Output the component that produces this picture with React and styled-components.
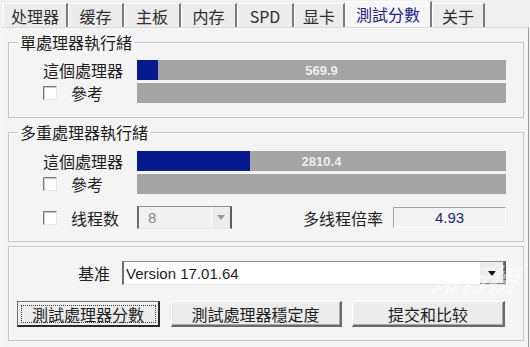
import styled, { createGlobalStyle } from "styled-components";

const GlobalStyle = createGlobalStyle`
  html, body {
    margin: 0;
    padding: 0;
    background: #f0f0f0;
  }
  body {
    font-family: "Noto Sans CJK SC", "Liberation Sans", sans-serif;
    color: #1e1e1e;
  }
`;

const Window = styled.div`
  position: relative;
  width: 530px;
  height: 347px;
  overflow: hidden;
  background: #f0f0f0;
  display: flex;
  flex-direction: column;
`;

const TabStrip = styled.div`
  display: flex;
  align-items: flex-end;
  height: 27px;
  padding-left: 3px;
  box-sizing: border-box;
`;

const Tab = styled.div`
  width: ${(p) => p.$w}px;
  height: ${(p) => (p.$active ? 26 : 24)}px;
  box-sizing: border-box;
  display: flex;
  align-items: center;
  justify-content: center;
  font-size: 16px;
  line-height: 1;
  padding-bottom: ${(p) => (p.$active ? 2 : 0)}px;
  color: ${(p) => (p.$active ? "#1b1f86" : "#2e2e2e")};
  background: ${(p) => (p.$active ? "#f6f6f6" : "#ececec")};
  border-top: 1px solid #fdfdfd;
  border-left: 1px solid #fdfdfd;
  border-right: 2px solid #7c7c7c;
`;

const Panel = styled.div`
  flex: 1;
  margin: 0 1px;
  padding: 0 4px 0 6px;
  background: #f4f4f4;
  border-top: 1px solid #dcdcdc;
  border-left: 1px solid #fdfdfd;
  border-right: 1px solid #9a9a9a;
`;

const Group = styled.fieldset`
  margin: ${(p) => p.$mt}px 0 0;
  padding: ${(p) => p.$pt || 0}px 0 ${(p) => p.$pb}px;
  min-width: 0;
  border: 1px solid #c8c8c8;
  box-shadow: inset 1px 1px #fbfbfb;
`;

const Legend = styled.legend`
  margin-left: 9px;
  padding: 0 2px;
  font-size: 16px;
  line-height: 20px;
  color: #1e1e1e;
`;

const Row = styled.div`
  display: flex;
  align-items: center;
  height: ${(p) => p.$h || 20}px;
  margin-top: ${(p) => p.$mt || 0}px;
  padding-left: ${(p) => (p.$pl ?? 34)}px;
  padding-right: 17px;
`;

const LabelCell = styled.div`
  width: ${(p) => p.$w || 94}px;
  flex-shrink: 0;
  display: flex;
  align-items: center;
  justify-content: ${(p) => (p.$right ? "flex-end" : "flex-start")};
  padding-right: ${(p) => (p.$right ? 12 : 0)}px;
  box-sizing: border-box;
  font-size: 16px;
  line-height: 20px;
  white-space: nowrap;
`;

const Check = styled.span`
  width: 14px;
  height: 14px;
  margin-right: 14px;
  box-sizing: border-box;
  background: #fff;
  border: 1px solid;
  border-color: #7a7a7a #e6e6e6 #e6e6e6 #7a7a7a;
  box-shadow: inset 1px 1px #c9c9c9;
`;

const Bar = styled.div`
  position: relative;
  width: 369px;
  height: 20px;
  background: #a4a4a4;
  display: flex;
  align-items: center;
  justify-content: center;
`;

const BarFill = styled.div`
  position: absolute;
  left: 0;
  top: 0;
  bottom: 0;
  background: #061a8e;
`;

const BarValue = styled.span`
  position: relative;
  font-family: "Liberation Sans", Arial, sans-serif;
  font-weight: bold;
  font-size: 13px;
  color: #ededed;
`;

const Combo = styled.div`
  width: ${(p) => p.$w}px;
  height: ${(p) => p.$h}px;
  box-sizing: border-box;
  display: flex;
  align-items: stretch;
  background: ${(p) => (p.$disabled ? "#f1f1f1" : "#fff")};
  border: 1px solid;
  border-width: 1px 2px 1px 2px;
  border-color: #8c8c8c #5e5e5e #e8e8e8 #6e6e6e;
`;

const ComboText = styled.div`
  flex: 1;
  display: flex;
  align-items: center;
  padding-left: ${(p) => p.$pl}px;
  font-family: "Liberation Sans", Arial, sans-serif;
  font-size: 15px;
  color: ${(p) => (p.$disabled ? "#8a8a8a" : "#1e1e1e")};
`;

const ComboButton = styled.div`
  width: ${(p) => p.$w}px;
  display: flex;
  align-items: center;
  justify-content: center;
  background: #ececec;
  border-left: 1px solid #fff;
  box-shadow: ${(p) => (p.$disabled ? "none" : "inset -1px -1px #7a7a7a")};
`;

const Arrow = styled.span`
  width: 0;
  height: 0;
  border-left: 4px solid transparent;
  border-right: 4px solid transparent;
  border-top: 5px solid ${(p) => (p.$disabled ? "#9a9a9a" : "#111")};
`;

const RatioLabel = styled.div`
  margin-left: auto;
  margin-right: 10px;
  font-size: 16px;
  line-height: 20px;
`;

const RatioBox = styled.div`
  width: 113px;
  height: 21px;
  box-sizing: border-box;
  display: flex;
  align-items: center;
  justify-content: center;
  background: #f3f3f3;
  border: 1px solid;
  border-color: #a5a5a5 #fbfbfb #fbfbfb #a5a5a5;
  font-family: "Liberation Sans", Arial, sans-serif;
  font-size: 15px;
  color: #26266e;
`;

const ButtonRow = styled.div`
  display: flex;
  justify-content: space-between;
  margin-top: 16px;
  padding: 0 18px 0 8px;
`;

const Button = styled.div`
  position: relative;
  width: ${(p) => p.$w}px;
  height: 26px;
  box-sizing: border-box;
  display: flex;
  align-items: center;
  justify-content: center;
  font-size: 16px;
  line-height: 1;
  background: #ececec;
  border: 1px solid;
  border-width: 1px 2px 2px 1px;
  border-color: ${(p) =>
    p.$default ? "#6a6a6a #2a2a2a #2a2a2a #6a6a6a" : "#fdfdfd #6a6a6a #6a6a6a #fdfdfd"};
  box-shadow: ${(p) => (p.$default ? "inset 1px 1px #fdfdfd" : "inset -1px -1px #a8a8a8")};
  outline: ${(p) => (p.$default ? "1px dotted #3a3a3a" : "none")};
  outline-offset: -5px;
`;

const Watermark = styled.div`
  position: absolute;
  left: 432px;
  top: 256px;
  font-family: "Noto Sans CJK SC", sans-serif;
  font-size: 30px;
  font-weight: bold;
  font-style: italic;
  letter-spacing: -2px;
  color: rgba(255, 255, 255, 0.5);
  transform: skewX(-12deg);
  pointer-events: none;
`;

const tabs = [
  { label: "处理器", w: 65 },
  { label: "缓存", w: 56 },
  { label: "主板", w: 57 },
  { label: "内存", w: 56 },
  { label: "SPD", w: 57 },
  { label: "显卡", w: 51 },
  { label: "測試分數", w: 87, active: true },
  { label: "关于", w: 53 },
];

function ScoreRow({ value, fill, mt }) {
  return (
    <Row $mt={mt}>
      <LabelCell>這個處理器</LabelCell>
      <Bar>
        <BarFill style={{ width: fill }} />
        <BarValue>{value}</BarValue>
      </Bar>
    </Row>
  );
}

function RefRow({ mt }) {
  return (
    <Row $mt={mt}>
      <LabelCell>
        <Check />
        參考
      </LabelCell>
      <Bar />
    </Row>
  );
}

export default function App() {
  return (
    <Window>
      <GlobalStyle />
      <TabStrip>
        {tabs.map((t) => (
          <Tab key={t.label} $w={t.w} $active={t.active}>
            {t.label}
          </Tab>
        ))}
      </TabStrip>
      <Panel>
        <Group $mt={4} $pb={14}>
          <Legend>單處理器執行緒</Legend>
          <ScoreRow value="569.9" fill={21} mt={8} />
          <RefRow mt={3} />
        </Group>

        <Group $mt={4} $pb={12}>
          <Legend>多重處理器執行緒</Legend>
          <ScoreRow value="2810.4" fill={113} mt={9} />
          <RefRow mt={3} />
          <Row $mt={12} $h={23}>
            <LabelCell>
              <Check />
              线程数
            </LabelCell>
            <Combo $w={95} $h={23} $disabled>
              <ComboText $pl={9} $disabled>
                8
              </ComboText>
              <ComboButton $w={18} $disabled>
                <Arrow $disabled />
              </ComboButton>
            </Combo>
            <RatioLabel>多线程倍率</RatioLabel>
            <RatioBox>4.93</RatioBox>
          </Row>
        </Group>

        <Group $mt={4} $pt={14} $pb={13}>
          <Row $h={24} $pl={0}>
            <LabelCell $w={113} $right>
              基准
            </LabelCell>
            <Combo $w={384} $h={24}>
              <ComboText $pl={2}>Version 17.01.64</ComboText>
              <ComboButton $w={24}>
                <Arrow />
              </ComboButton>
            </Combo>
          </Row>
          <ButtonRow>
            <Button $w={143} $default>
              測試處理器分數
            </Button>
            <Button $w={171}>測試處理器穩定度</Button>
            <Button $w={153}>提交和比较</Button>
          </ButtonRow>
        </Group>
      </Panel>
      <Watermark>排行榜</Watermark>
    </Window>
  );
}
